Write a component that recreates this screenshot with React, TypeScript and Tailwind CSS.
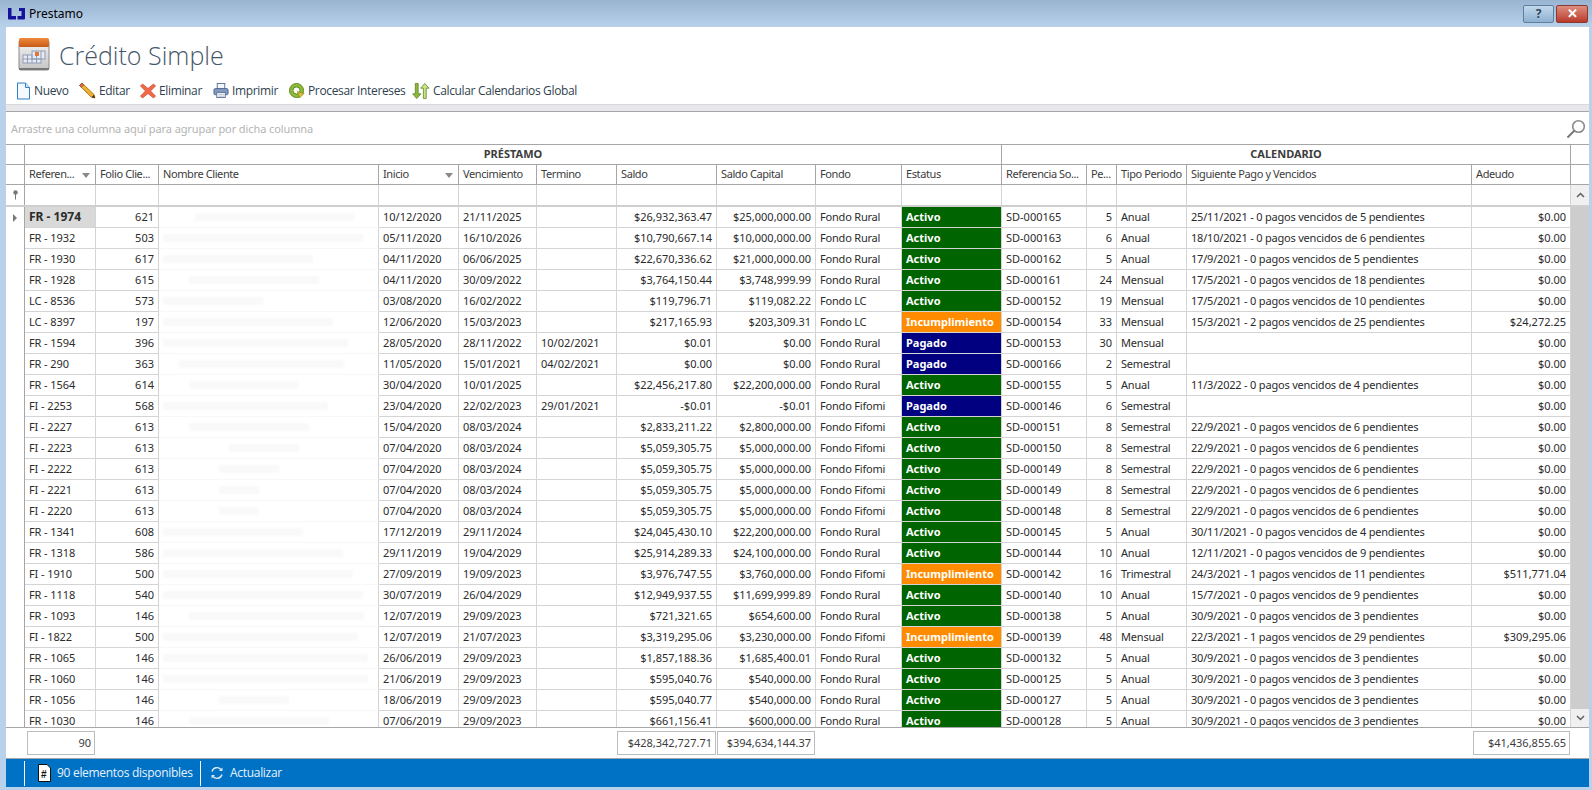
import React from 'react';

const GRID =
  'grid grid-cols-[19px_71px_63px_220px_80px_78px_80px_100px_99px_86px_100px_85px_30px_70px_285px_99px_18px]';

type Row = [string, string, string, string, string, string, string, string, string, string, string, string, string, string, string];

const vencidos = (fecha: string, v: number, p: number) => `${fecha} - ${v} pagos vencidos de ${p} pendientes`;

const rows: Row[] = [
  ['FR - 1974', '621', '10/12/2020', '21/11/2025', '', '$26,932,363.47', '$25,000,000.00', 'Fondo Rural', 'Activo', 'SD-000165', '5', 'Anual', vencidos('25/11/2021', 0, 5), '$0.00', 'ml-[36px] w-[160px]'],
  ['FR - 1932', '503', '05/11/2020', '16/10/2026', '', '$10,790,667.14', '$10,000,000.00', 'Fondo Rural', 'Activo', 'SD-000163', '6', 'Anual', vencidos('18/10/2021', 0, 6), '$0.00', 'ml-[4px] w-[200px]'],
  ['FR - 1930', '617', '04/11/2020', '06/06/2025', '', '$22,670,336.62', '$21,000,000.00', 'Fondo Rural', 'Activo', 'SD-000162', '5', 'Anual', vencidos('17/9/2021', 0, 5), '$0.00', 'ml-[4px] w-[150px]'],
  ['FR - 1928', '615', '04/11/2020', '30/09/2022', '', '$3,764,150.44', '$3,748,999.99', 'Fondo Rural', 'Activo', 'SD-000161', '24', 'Mensual', vencidos('17/5/2021', 0, 18), '$0.00', 'ml-[30px] w-[130px]'],
  ['LC - 8536', '573', '03/08/2020', '16/02/2022', '', '$119,796.71', '$119,082.22', 'Fondo LC', 'Activo', 'SD-000152', '19', 'Mensual', vencidos('17/5/2021', 0, 10), '$0.00', 'ml-[4px] w-[100px]'],
  ['LC - 8397', '197', '12/06/2020', '15/03/2023', '', '$217,165.93', '$203,309.31', 'Fondo LC', 'Incumplimiento', 'SD-000154', '33', 'Mensual', vencidos('15/3/2021', 2, 25), '$24,272.25', 'ml-[4px] w-[170px]'],
  ['FR - 1594', '396', '28/05/2020', '28/11/2022', '10/02/2021', '$0.01', '$0.00', 'Fondo Rural', 'Pagado', 'SD-000153', '30', 'Mensual', '', '$0.00', 'ml-[4px] w-[185px]'],
  ['FR - 290', '363', '11/05/2020', '15/01/2021', '04/02/2021', '$0.00', '$0.00', 'Fondo Rural', 'Pagado', 'SD-000166', '2', 'Semestral', '', '$0.00', 'ml-[20px] w-[165px]'],
  ['FR - 1564', '614', '30/04/2020', '10/01/2025', '', '$22,456,217.80', '$22,200,000.00', 'Fondo Rural', 'Activo', 'SD-000155', '5', 'Anual', vencidos('11/3/2022', 0, 4), '$0.00', 'ml-[30px] w-[110px]'],
  ['FI - 2253', '568', '23/04/2020', '22/02/2023', '29/01/2021', '-$0.01', '-$0.01', 'Fondo Fifomi', 'Pagado', 'SD-000146', '6', 'Semestral', '', '$0.00', 'ml-[4px] w-[165px]'],
  ['FI - 2227', '613', '15/04/2020', '08/03/2024', '', '$2,833,211.22', '$2,800,000.00', 'Fondo Fifomi', 'Activo', 'SD-000151', '8', 'Semestral', vencidos('22/9/2021', 0, 6), '$0.00', 'ml-[30px] w-[120px]'],
  ['FI - 2223', '613', '07/04/2020', '08/03/2024', '', '$5,059,305.75', '$5,000,000.00', 'Fondo Fifomi', 'Activo', 'SD-000150', '8', 'Semestral', vencidos('22/9/2021', 0, 6), '$0.00', 'ml-[70px] w-[70px]'],
  ['FI - 2222', '613', '07/04/2020', '08/03/2024', '', '$5,059,305.75', '$5,000,000.00', 'Fondo Fifomi', 'Activo', 'SD-000149', '8', 'Semestral', vencidos('22/9/2021', 0, 6), '$0.00', 'ml-[60px] w-[60px]'],
  ['FI - 2221', '613', '07/04/2020', '08/03/2024', '', '$5,059,305.75', '$5,000,000.00', 'Fondo Fifomi', 'Activo', 'SD-000149', '8', 'Semestral', vencidos('22/9/2021', 0, 6), '$0.00', 'ml-[60px] w-[40px]'],
  ['FI - 2220', '613', '07/04/2020', '08/03/2024', '', '$5,059,305.75', '$5,000,000.00', 'Fondo Fifomi', 'Activo', 'SD-000148', '8', 'Semestral', vencidos('22/9/2021', 0, 6), '$0.00', 'ml-[60px] w-[40px]'],
  ['FR - 1341', '608', '17/12/2019', '29/11/2024', '', '$24,045,430.10', '$22,200,000.00', 'Fondo Rural', 'Activo', 'SD-000145', '5', 'Anual', vencidos('30/11/2021', 0, 4), '$0.00', 'ml-[4px] w-[140px]'],
  ['FR - 1318', '586', '29/11/2019', '19/04/2029', '', '$25,914,289.33', '$24,100,000.00', 'Fondo Rural', 'Activo', 'SD-000144', '10', 'Anual', vencidos('12/11/2021', 0, 9), '$0.00', 'ml-[4px] w-[180px]'],
  ['FI - 1910', '500', '27/09/2019', '19/09/2023', '', '$3,976,747.55', '$3,760,000.00', 'Fondo Fifomi', 'Incumplimiento', 'SD-000142', '16', 'Trimestral', vencidos('24/3/2021', 1, 11), '$511,771.04', 'ml-[4px] w-[190px]'],
  ['FR - 1118', '540', '30/07/2019', '26/04/2029', '', '$12,949,937.55', '$11,699,999.89', 'Fondo Rural', 'Activo', 'SD-000140', '10', 'Anual', vencidos('15/7/2021', 0, 9), '$0.00', 'ml-[4px] w-[200px]'],
  ['FR - 1093', '146', '12/07/2019', '29/09/2023', '', '$721,321.65', '$654,600.00', 'Fondo Rural', 'Activo', 'SD-000138', '5', 'Anual', vencidos('30/9/2021', 0, 3), '$0.00', 'ml-[30px] w-[175px]'],
  ['FI - 1822', '500', '12/07/2019', '21/07/2023', '', '$3,319,295.06', '$3,230,000.00', 'Fondo Fifomi', 'Incumplimiento', 'SD-000139', '48', 'Mensual', vencidos('22/3/2021', 1, 29), '$309,295.06', 'ml-[4px] w-[195px]'],
  ['FR - 1065', '146', '26/06/2019', '29/09/2023', '', '$1,857,188.36', '$1,685,400.01', 'Fondo Rural', 'Activo', 'SD-000132', '5', 'Anual', vencidos('30/9/2021', 0, 3), '$0.00', 'ml-[4px] w-[205px]'],
  ['FR - 1060', '146', '21/06/2019', '29/09/2023', '', '$595,040.76', '$540,000.00', 'Fondo Rural', 'Activo', 'SD-000125', '5', 'Anual', vencidos('30/9/2021', 0, 3), '$0.00', 'ml-[4px] w-[205px]'],
  ['FR - 1056', '146', '18/06/2019', '29/09/2023', '', '$595,040.77', '$540,000.00', 'Fondo Rural', 'Activo', 'SD-000127', '5', 'Anual', vencidos('30/9/2021', 0, 3), '$0.00', 'ml-[60px] w-[70px]'],
  ['FR - 1030', '146', '07/06/2019', '29/09/2023', '', '$661,156.41', '$600,000.00', 'Fondo Rural', 'Activo', 'SD-000128', '5', 'Anual', vencidos('30/9/2021', 0, 3), '$0.00', 'ml-[30px] w-[140px]'],
];

const statusBg: Record<string, string> = {
  Activo: 'bg-[#006400]',
  Incumplimiento: 'bg-[#ff8c00]',
  Pagado: 'bg-[#000080]',
};

const headers = ['Referen...', 'Folio Clie...', 'Nombre Cliente', 'Inicio', 'Vencimiento', 'Termino', 'Saldo', 'Saldo Capital', 'Fondo', 'Estatus', 'Referencia So...', 'Pe...', 'Tipo Periodo', 'Siguiente Pago y Vencidos', 'Adeudo'];

const cell = 'h-[21px] border-r border-b border-[#d4d4d4] px-[4px] flex items-center overflow-hidden whitespace-nowrap';

const AppIcon = () => (
  <svg width="17" height="12" viewBox="0 0 17 12" className="shrink-0">
    <path d="M0 0h3.500v8H8v3.500H1a1 1 0 0 1-1-1z" fill="#14149a" />
    <path d="M11 0h6v10.500a1 1 0 0 1-1 1h-6.500V8h4V3H11z" fill="#14149a" />
  </svg>
);

const CalendarIcon = () => (
  <svg width="32" height="34" viewBox="0 0 32 34" className="shrink-0">
    <defs>
      <linearGradient id="cal-top" x1="0" y1="0" x2="0" y2="1">
        <stop offset="0" stopColor="#f08a3c" />
        <stop offset="1" stopColor="#c8591a" />
      </linearGradient>
      <linearGradient id="cal-body" x1="0" y1="0" x2="0" y2="1">
        <stop offset="0" stopColor="#f4f4f4" />
        <stop offset="1" stopColor="#c4c4c4" />
      </linearGradient>
    </defs>
    <rect x="1" y="3" width="30" height="30" rx="2" fill="url(#cal-body)" stroke="#8a8a8a" />
    <rect x="1" y="1" width="30" height="9" rx="1.500" fill="url(#cal-top)" />
    <g stroke="#8f9cb5" strokeWidth="1" fill="#e6eaf2">
      <rect x="5" y="18" width="18" height="8" />
      <rect x="14" y="14" width="13" height="8" />
      <path d="M9.500 18v8M14 18v8M18.500 14v12M23 14v8M5 22h18" fill="none" />
    </g>
    <rect x="17" y="15" width="4" height="4" fill="#e2763a" />
    <rect x="1" y="31" width="30" height="2" fill="#777" />
  </svg>
);

const NewIcon = () => (
  <svg width="15" height="18" viewBox="0 0 15 18" className="shrink-0">
    <path d="M1.500 1h8l4 4.500V17h-12z" fill="#f4f9ff" stroke="#2f7fc4" />
    <path d="M9.500 1v4.500h4" fill="#cfe4f7" stroke="#2f7fc4" />
  </svg>
);

const PencilIcon = () => (
  <svg width="18" height="17" viewBox="0 0 17 17" className="shrink-0">
    <path d="M1 3.500 3.500 1l12 11.500 1 3.500-3.700-.8z" fill="#f0b02c" stroke="#9b6a16" strokeWidth="0.8" />
    <path d="M1 3.500 3.500 1l1.800 1.800-2.500 2.500z" fill="#d9694f" stroke="#8c4030" strokeWidth="0.6" />
    <path d="M13 15.200 15.500 12.700l1 3.300z" fill="#3c3024" />
  </svg>
);

const DeleteIcon = () => (
  <svg width="16" height="16" viewBox="0 0 16 16" className="shrink-0">
    <path d="M2.500 1 8 5.500 13.500 1 15.500 3 10.500 8l5 5-2 2L8 10.500 2.500 15 .5 13l5-5-5-5z" fill="#f2694a" stroke="#c9442c" strokeWidth="0.7" />
  </svg>
);

const PrintIcon = () => (
  <svg width="16" height="17" viewBox="0 0 17 17" className="shrink-0">
    <rect x="4.500" y="1" width="8" height="6" fill="#f2f5fa" stroke="#5b6f94" />
    <rect x="1" y="6.500" width="15" height="6.500" rx="1.500" fill="#8399c0" stroke="#4e6288" />
    <rect x="4" y="10.500" width="9" height="5.500" fill="#fff" stroke="#5b6f94" />
    <path d="M5.500 12.500h6M5.500 14.500h6" stroke="#a5b2ca" />
  </svg>
);

const ProcessIcon = () => (
  <svg width="17" height="17" viewBox="0 0 17 17" className="shrink-0">
    <circle cx="8.500" cy="8.500" r="7" fill="#8fbc3a" stroke="#5c8a1e" />
    <circle cx="8.500" cy="8.500" r="3.600" fill="#fbfcf2" stroke="#5c8a1e" />
    <path d="M9.500 9.500 16 11.500 11.500 16z" fill="#d9c23a" stroke="#7e7a16" strokeWidth="0.6" />
  </svg>
);

const ArrowsIcon = () => (
  <svg width="18" height="18" viewBox="0 0 19 18" className="shrink-0">
    <path d="M3.500 1h3v11H9.500L5 17 .7 12h2.800z" fill="#8fb83a" stroke="#55801c" strokeWidth="0.8" />
    <path d="M12 17h3V6h3L13.500 1 9.200 6H12z" fill="#cfe08a" stroke="#55801c" strokeWidth="0.8" />
  </svg>
);

const HashDocIcon = () => (
  <svg width="13" height="18" viewBox="0 0 13 18" className="shrink-0">
    <path d="M.5.500h8.500l3.500 3.500v13.500H.5z" fill="#fff" stroke="#111" />
    <text x="3" y="14" fontSize="10" fontWeight="700" fill="#111" fontFamily="'Liberation Sans', sans-serif">#</text>
  </svg>
);

const RefreshIcon = () => (
  <svg width="14" height="14" viewBox="0 0 14 14" fill="none" className="shrink-0">
    <path d="M2 5.500A5.200 5.200 0 0 1 11 3.500" stroke="#dce9f5" strokeWidth="1.400" />
    <path d="M12 8.500A5.200 5.200 0 0 1 3 10.500" stroke="#dce9f5" strokeWidth="1.400" />
    <path d="M12.500 1.500v3.500H9z" fill="#dce9f5" />
    <path d="M1.500 12.500V9H5z" fill="#dce9f5" />
  </svg>
);

const SearchIcon = () => (
  <svg width="20" height="20" viewBox="0 0 20 20" fill="none">
    <circle cx="12.500" cy="7.500" r="5.800" stroke="#8a8a8a" strokeWidth="1.600" />
    <path d="M8.500 11.500 1.500 18.500" stroke="#777" strokeWidth="2" />
  </svg>
);

const ToolItem = ({ icon, label, width }: { icon: React.ReactNode; label: string; width: string }) => (
  <div className={`flex items-center gap-[3px] ${width}`}>
    {icon}
    <span className="whitespace-nowrap">{label}</span>
  </div>
);

const Total = ({ value, className = '' }: { value: string; className?: string }) => (
  <div className={`pt-[3px] pr-[1px] ${className}`}>
    <div className="h-[24px] flex items-center justify-end pr-[3px] border border-[#bdbdbd]">{value}</div>
  </div>
);

export default function App() {
  return (
    <div className="w-[1592px] h-[790px] flex flex-col overflow-hidden bg-[#b9d1ea] font-['Noto_Sans',sans-serif] text-[11px] text-[#2b2b2b]">
      {/* barra de titulo */}
      <div className="h-[27px] shrink-0 flex items-center justify-between pl-[8px] pr-[4px] bg-gradient-to-b from-[#99b4d1] to-[#b9d1ea]">
        <div className="flex items-center gap-[4px] text-[12px] text-black">
          <AppIcon />
          <span>Prestamo</span>
        </div>
        <div className="flex items-center gap-[2px]">
          <div className="w-[31px] h-[18px] flex items-center justify-center rounded-[2px] border border-[#5f7f9f] bg-gradient-to-b from-[#c2d8ec] to-[#8fb1d1] text-[12px] font-bold text-[#33475e]">?</div>
          <div className="w-[32px] h-[18px] flex items-center justify-center rounded-[2px] border border-[#8a3a30] bg-gradient-to-b from-[#dd8d80] to-[#b8392a] text-[13px] font-bold text-white">✕</div>
        </div>
      </div>

      <div className="flex-1 flex flex-col ml-[6px] mr-[3px] mb-[3px] bg-white min-h-0">
        {/* encabezado */}
        <div className="h-[78px] shrink-0 pl-[10px] border-b border-[#d9d9d9]">
          <div className="flex items-center gap-[9px] h-[50px] pt-[3px] pl-[2px]">
            <CalendarIcon />
            <h1 className="font-['Open_Sans',sans-serif] font-light text-[25px] leading-[36px] mt-[2px] text-[#465868]">Crédito Simple</h1>
          </div>
          <div className="flex items-center h-[26px] pt-[1px] font-['Open_Sans',sans-serif] text-[12px] tracking-[-0.35px] text-[#2f3f4f]">
            <ToolItem icon={<NewIcon />} label="Nuevo" width="w-[62px]" />
            <ToolItem icon={<PencilIcon />} label="Editar" width="w-[62px]" />
            <ToolItem icon={<DeleteIcon />} label="Eliminar" width="w-[73px]" />
            <ToolItem icon={<PrintIcon />} label="Imprimir" width="w-[75px]" />
            <ToolItem icon={<ProcessIcon />} label="Procesar Intereses" width="w-[124px]" />
            <ToolItem icon={<ArrowsIcon />} label="Calcular Calendarios Global" width="w-[170px]" />
          </div>
        </div>
        <div className="h-[6px] shrink-0 bg-[#e8e8ec]" />

        {/* panel de agrupacion */}
        <div className="h-[34px] shrink-0 flex items-center justify-between pl-[5px] pr-[3px] pt-[2px] border-t border-b border-[#a6a6a6] text-[#b4b4b4] tracking-[-0.1px]">
          <span>Arrastre una columna aquí para agrupar por dicha columna</span>
          <SearchIcon />
        </div>

        {/* bandas */}
        <div className="h-[20px] shrink-0 grid grid-cols-[19px_977px_569px_18px] border-b border-[#a6a6a6] font-bold text-[#3c3c3c]">
          <div className="border-r border-[#a6a6a6]" />
          <div className="flex items-center justify-center border-r border-[#a6a6a6]">PRÉSTAMO</div>
          <div className="flex items-center justify-center border-r border-[#a6a6a6]">CALENDARIO</div>
          <div />
        </div>

        {/* columnas */}
        <div className={`${GRID} h-[20px] shrink-0 border-b border-[#a6a6a6] text-[#3c3c3c] tracking-[-0.4px]`}>
          <div className="border-r border-[#a6a6a6]" />
          {headers.map((h) => (
            <div key={h} className="relative flex items-center px-[4px] border-r border-[#a6a6a6] whitespace-nowrap overflow-hidden">
              {h}
              {(h === 'Referen...' || h === 'Inicio') && (
                <div className="absolute right-[5px] top-[8px] border-x-[4px] border-x-transparent border-t-[5px] border-t-[#8a8a8a]" />
              )}
            </div>
          ))}
          <div />
        </div>

        {/* filtro */}
        <div className={`${GRID} h-[22px] shrink-0 border-b-2 border-[#cfcfcf]`}>
          <div className="flex items-center justify-center border-r border-[#a6a6a6]">
            <svg width="7" height="10" viewBox="0 0 7 10">
              <circle cx="3.500" cy="2.500" r="2.200" fill="#777" />
              <path d="M3.500 4v5.500" stroke="#777" />
            </svg>
          </div>
          {headers.map((h) => (
            <div key={h} className="border-r border-[#d4d4d4]" />
          ))}
          <div className="flex items-center justify-center bg-[#f0f0f0]">
            <svg width="9" height="6" viewBox="0 0 9 6" fill="none">
              <path d="M1 5 4.500 1.500 8 5" stroke="#606060" strokeWidth="1.500" />
            </svg>
          </div>
        </div>

        {/* filas */}
        <div className="h-[521px] shrink-0 relative overflow-hidden border-b border-[#a6a6a6]">
          {rows.map((r, i) => (
            <div key={r[0]} className={GRID}>
              <div className="h-[21px] flex items-center justify-center border-r border-[#a6a6a6]">
                {i === 0 && <div className="border-y-[4px] border-y-transparent border-l-[4px] border-l-[#7a7a7a]" />}
              </div>
              <div className={`${cell} ${i === 0 ? 'bg-[#d9d9d9] font-bold text-[12px]' : 'tracking-[-0.1px]'}`}>{r[0]}</div>
              <div className={`${cell} justify-end`}>{r[1]}</div>
              <div className="h-[21px] border-r border-b border-r-[#d4d4d4] border-b-[#f8f8f8] flex items-center">
                <div className={`h-[8px] bg-[#f9f9f9] blur-[1px] ${r[14]}`} />
              </div>
              <div className={cell}>{r[2]}</div>
              <div className={cell}>{r[3]}</div>
              <div className={cell}>{r[4]}</div>
              <div className={`${cell} justify-end`}>{r[5]}</div>
              <div className={`${cell} justify-end`}>{r[6]}</div>
              <div className={`${cell} tracking-[-0.2px]`}>{r[7]}</div>
              <div className={`${cell} ${statusBg[r[8]]} font-bold text-white`}>{r[8]}</div>
              <div className={cell}>{r[9]}</div>
              <div className={`${cell} justify-end`}>{r[10]}</div>
              <div className={`${cell} tracking-[-0.2px]`}>{r[11]}</div>
              <div className={`${cell} tracking-[-0.2px]`}>{r[12]}</div>
              <div className={`${cell} justify-end`}>{r[13]}</div>
              <div className="h-[21px] bg-[#cdcdcd]" />
            </div>
          ))}
          <div className="absolute right-0 bottom-0 w-[18px] h-[18px] flex items-center justify-center bg-[#f0f0f0]">
            <svg width="9" height="6" viewBox="0 0 9 6" fill="none">
              <path d="M1 1 4.500 4.500 8 1" stroke="#606060" strokeWidth="1.500" />
            </svg>
          </div>
        </div>

        {/* totales */}
        <div className={`${GRID} h-[31px] shrink-0 border-b border-[#a6a6a6] text-[#3c3c3c]`}>
          <div />
          <Total value="90" className="pl-[2px]" />
          <div className="col-span-5" />
          <Total value="$428,342,727.71" />
          <Total value="$394,634,144.37" />
          <div className="col-span-6" />
          <Total value="$41,436,855.65" className="pl-[1px]" />
          <div />
        </div>

        {/* barra de estado */}
        <div className="flex-1 flex items-center bg-[#0072c6] text-[12px] tracking-[-0.3px] text-[#e8f1f9] font-['Open_Sans',sans-serif]">
          <div className="ml-[18px] h-[25px] border-l border-white" />
          <div className="flex items-center gap-[6px] w-[175px] pl-[13px]">
            <HashDocIcon />
            <span className="whitespace-nowrap">90 elementos disponibles</span>
          </div>
          <div className="h-[25px] border-l border-white" />
          <div className="flex items-center gap-[6px] pl-[9px]">
            <RefreshIcon />
            <span>Actualizar</span>
          </div>
        </div>
      </div>
    </div>
  );
}
